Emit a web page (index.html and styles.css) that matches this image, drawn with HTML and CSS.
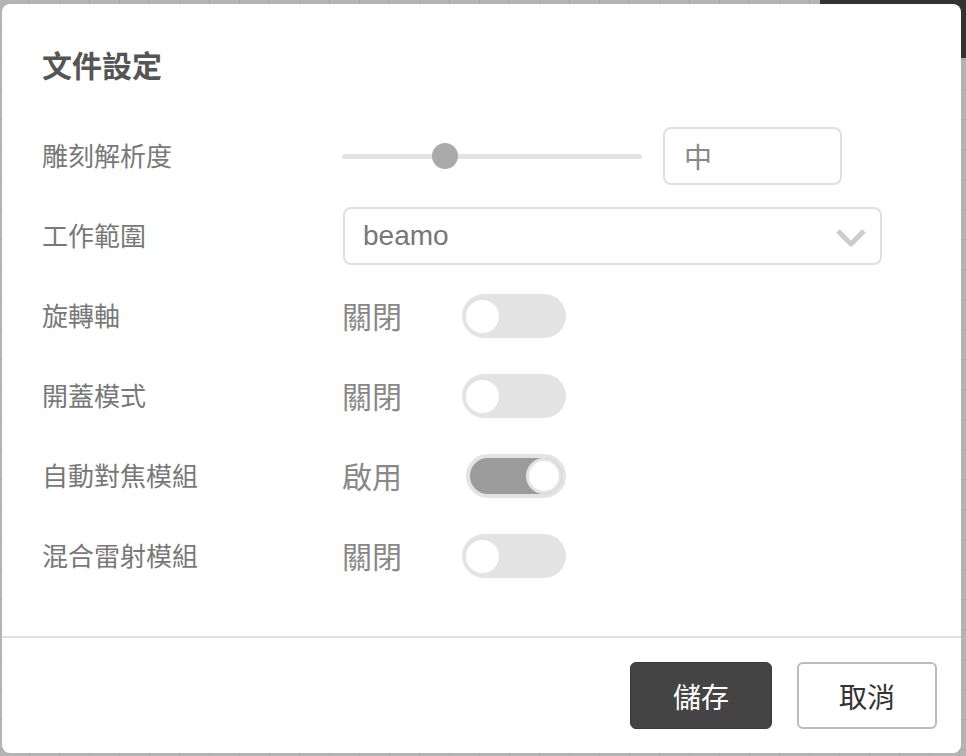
FILE: index.html
```html
<!doctype html>
<html lang="zh-Hant">
  <head>
    <meta charset="UTF-8" />
    <meta name="viewport" content="width=device-width, initial-scale=1.0" />
    <title>文件設定</title>
    <link rel="stylesheet" href="styles.css">
  </head>
  <body>
    <div class="modal">
      <div class="modal-body">
        <h2 class="title">文件設定</h2>

        <div class="rows">
          <div class="row">
            <div class="label">雕刻解析度</div>
            <div class="slider">
              <div class="slider-track"></div>
              <div class="slider-thumb"></div>
            </div>
            <div class="text-box">中</div>
          </div>

          <div class="row">
            <div class="label">工作範圍</div>
            <div class="select">
              <span>beamo</span>
              <svg class="chevron" width="30" height="19" viewBox="0 0 30 19">
                <polyline points="2,3 15,16 28,3" fill="none" stroke="#cccccc" stroke-width="5" stroke-linejoin="round" />
              </svg>
            </div>
          </div>

          <div class="row">
            <div class="label">旋轉軸</div>
            <div class="value">關閉</div>
            <div class="toggle"><div class="knob"></div></div>
          </div>

          <div class="row">
            <div class="label">開蓋模式</div>
            <div class="value">關閉</div>
            <div class="toggle"><div class="knob"></div></div>
          </div>

          <div class="row">
            <div class="label">自動對焦模組</div>
            <div class="value">啟用</div>
            <div class="toggle on"><div class="knob"></div></div>
          </div>

          <div class="row">
            <div class="label">混合雷射模組</div>
            <div class="value">關閉</div>
            <div class="toggle"><div class="knob"></div></div>
          </div>
        </div>
      </div>

      <div class="modal-footer">
        <button class="btn btn-primary">儲存</button>
        <button class="btn btn-default">取消</button>
      </div>
    </div>
  </body>
</html>
```

FILE: styles.css
```css
:root {
  --title-color: #555555; --label-color: #787878; --value-color: #888888;
  --line-color: #e0e0e0; --track-color: #e3e3e3; --knob-on-bg: #9b9b9b;
  --primary-bg: #444444; --default-border: #bbbbbb;
}
html, body { margin: 0; padding: 0; width: 966px; height: 756px; overflow: hidden; }
body {
  font-family: "Noto Sans CJK TC", "Noto Sans", sans-serif;
  background-color: #b4b4b4;
  background-image:
    linear-gradient(#333333, #333333),
    repeating-linear-gradient(to bottom, transparent 0, transparent 29px, #a8a8a8 29px, #a8a8a8 30px),
    repeating-linear-gradient(to right, transparent 0, transparent 29px, #a8a8a8 29px, #a8a8a8 30px);
  background-size: 146px 58px, auto, auto;
  background-position: right top, 0 0, 0 0;
  background-repeat: no-repeat, repeat, repeat;
}

.modal { margin: 4px 0 0 2px; width: 959px; height: 749px; box-sizing: border-box; background: #ffffff; border-radius: 8px; display: flex; flex-direction: column; }
.modal-body { flex: 1; padding: 40px 40px 0 40px; }
.title { margin: 0 0 43px 0; font-size: 30px; line-height: 40px; font-weight: bold; color: var(--title-color); }

.rows { display: flex; flex-direction: column; gap: 22px; }
.row { display: flex; align-items: center; height: 58px; }
.label { width: 300px; font-size: 26px; color: var(--label-color); margin-top: -3px; }
.value { width: 120px; font-size: 30px; color: var(--value-color); margin-top: -2px; }

.slider { position: relative; width: 300px; height: 26px; display: flex; align-items: center; }
.slider-track { width: 100%; height: 5px; background: var(--track-color); border-radius: 3px; }
.slider-thumb { position: absolute; left: 90px; top: 0; width: 26px; height: 26px; border-radius: 50%; background: #aaaaaa; }

.text-box { margin-left: 21px; width: 179px; height: 58px; box-sizing: border-box; border: 2px solid var(--line-color); border-radius: 8px; padding: 0 19px; display: flex; align-items: center; font-size: 28px; color: var(--value-color); }

.select { margin-left: 1px; width: 539px; height: 58px; box-sizing: border-box; border: 2px solid var(--line-color); border-radius: 8px; padding: 0 14px 0 18px; display: flex; align-items: center; justify-content: space-between; font-family: "Liberation Sans", "Noto Sans CJK TC", sans-serif; font-size: 28px; color: #777777; }
.chevron { display: block; margin-top: 2px; }

.toggle { width: 104px; height: 44px; box-sizing: border-box; border-radius: 22px; background: var(--track-color); padding: 0 4px; display: flex; align-items: center; }
.toggle .knob { width: 33px; height: 33px; border-radius: 50%; background: #ffffff; }
.toggle.on { width: 100px; margin-left: 4px; padding: 0; border: 4px solid var(--track-color); background: var(--knob-on-bg); justify-content: flex-end; }
.toggle.on .knob { width: 36px; height: 36px; box-sizing: border-box; border: 3px solid var(--track-color); }

.modal-footer { border-top: 2px solid var(--line-color); padding: 24px; display: flex; justify-content: flex-end; gap: 25px; }
.btn { height: 67px; border-radius: 6px; font-family: "Noto Sans CJK TC", sans-serif; font-size: 28px; cursor: pointer; box-sizing: border-box; padding: 0; }
.btn-primary { width: 142px; background: var(--primary-bg); color: #ffffff; border: 1px solid #3a3a3a; }
.btn-default { width: 140px; background: #ffffff; color: #333333; border: 2px solid var(--default-border); }
```
